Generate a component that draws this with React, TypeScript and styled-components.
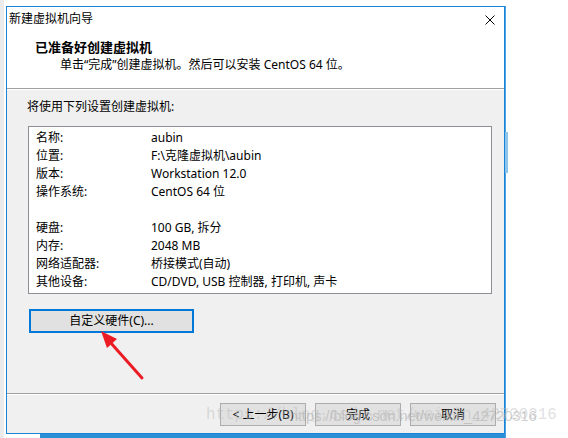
import React from "react";
import styled, { createGlobalStyle } from "styled-components";

const GlobalStyle = createGlobalStyle`
  *, *::before, *::after { box-sizing: border-box; }
  html, body { margin: 0; padding: 0; background: #fff; }
  body { font-family: "Noto Sans", "Noto Sans CJK SC", sans-serif; }
`;

const Page = styled.div`
  position: relative;
  width: 568px;
  height: 438px;
  overflow: hidden;
  background: #fff;
  display: flex;
  align-items: stretch;
`;

const LeftEdge = styled.div`
  width: 4px;
  margin-right: 2px;
  background: #ebebeb;
`;

const RightEdge = styled.div`
  width: 3px;
  background:
    linear-gradient(#8cc4ec, #8cc4ec) 0 132px / 3px 41px no-repeat,
    linear-gradient(#4fa3e3, #4fa3e3) 0 6px / 1px 100% no-repeat;
`;

const Column = styled.div`
  display: flex;
  flex-direction: column;
  padding-top: 6px;
`;

const Dialog = styled.div`
  width: 499px;
  height: 428px;
  border: 1px solid #1883d7;
  background: #f0f0f0;
  display: flex;
  flex-direction: column;
  font-size: 12px;
  line-height: 16px;
  color: #000;
`;

const TaskStrip = styled.div`
  height: 4px;
  margin-left: 34px;
  background: #2b8fd6;
`;

const Top = styled.div`
  height: 81px;
  background: #fff;
  display: flex;
  flex-direction: column;
`;

const TitleBar = styled.div`
  height: 23px;
  display: flex;
  align-items: center;
  justify-content: space-between;
  padding: 0 9px 0 2px;
`;

const Title = styled.span`
  font-size: 12px;
`;

const CloseIcon = styled.svg`
  width: 10px;
  height: 10px;
  margin-top: 2px;
`;

const Header = styled.div`
  padding: 9px 0 0 28px;
  display: flex;
  flex-direction: column;
`;

const Heading = styled.div`
  font-weight: bold;
  font-size: 13px;
  line-height: 17px;
`;

const SubTitle = styled.div`
  padding-left: 25px;
  margin-top: 1px;
`;

const Separator = styled.div`
  height: 2px;
  border-top: 1px solid #a0a0a0;
  background: #fff;
`;

const Body = styled.div`
  flex: 1;
  padding: 9px 12px 0 20px;
  display: flex;
  flex-direction: column;
  align-items: flex-start;
`;

const Intro = styled.div``;

const SummaryBox = styled.div`
  align-self: stretch;
  margin: 11px 0 0 1px;
  height: 168px;
  border: 1px solid #8c8f94;
  background: #fff;
  padding: 2px 0 0 7px;
  display: grid;
  grid-template-columns: 115px 1fr;
  grid-auto-rows: 18px;
  align-items: center;
`;

const Cell = styled.div`
  white-space: nowrap;
`;

const CustomButton = styled.div`
  margin: 15px 0 0 2px;
  width: 165px;
  height: 24px;
  border: 2px solid #0078d7;
  background: #e1e1e1;
  display: flex;
  align-items: center;
  justify-content: center;
`;

const Footer = styled.div`
  height: 38px;
  padding: 8px 8px 0 0;
  display: flex;
  justify-content: flex-end;
  align-items: flex-start;
  gap: 9px;
`;

const FooterButton = styled.div`
  width: 86px;
  height: 23px;
  border: 1px solid #adadad;
  background: #e1e1e1;
  display: flex;
  align-items: center;
  justify-content: center;
`;

const Watermark = styled.div<{ $left: number; $top: number; $mono?: boolean }>`
  position: absolute;
  left: ${(p) => p.$left}px;
  top: ${(p) => p.$top}px;
  white-space: nowrap;
  pointer-events: none;
  font-family: ${(p) => (p.$mono ? '"Liberation Mono", monospace' : '"Liberation Sans", sans-serif')};
  font-size: ${(p) => (p.$mono ? 15.8 : 14.5)}px;
  color: ${(p) => (p.$mono ? "rgba(185,185,185,0.45)" : "rgba(175,175,175,0.6)")};
`;

const ArrowSvg = styled.svg`
  position: absolute;
  left: 0;
  top: 0;
  width: 568px;
  height: 438px;
  pointer-events: none;
`;

const rows: [string, string][] = [
  ["名称:", "aubin"],
  ["位置:", "F:\\克隆虚拟机\\aubin"],
  ["版本:", "Workstation 12.0"],
  ["操作系统:", "CentOS 64 位"],
  ["", ""],
  ["硬盘:", "100 GB, 拆分"],
  ["内存:", "2048 MB"],
  ["网络适配器:", "桥接模式(自动)"],
  ["其他设备:", "CD/DVD, USB 控制器, 打印机, 声卡"],
];

export default function App() {
  return (
    <>
      <GlobalStyle />
      <Page>
        <LeftEdge />
        <Column>
          <Dialog>
            <Top>
              <TitleBar>
                <Title>新建虚拟机向导</Title>
                <CloseIcon viewBox="0 0 10 10">
                  <path d="M0.5 0.5 L9.5 9.5 M9.5 0.5 L0.5 9.5" stroke="#000" strokeWidth="1" fill="none" />
                </CloseIcon>
              </TitleBar>
              <Header>
                <Heading>已准备好创建虚拟机</Heading>
                <SubTitle>单击“完成”创建虚拟机。然后可以安装 CentOS 64 位。</SubTitle>
              </Header>
            </Top>
            <Separator />
            <Body>
              <Intro>将使用下列设置创建虚拟机:</Intro>
              <SummaryBox>
                {rows.map(([k, v], i) => (
                  <React.Fragment key={i}>
                    <Cell>{k}</Cell>
                    <Cell>{v}</Cell>
                  </React.Fragment>
                ))}
              </SummaryBox>
              <CustomButton>自定义硬件(C)...</CustomButton>
            </Body>
            <Separator />
            <Footer>
              <FooterButton>&lt; 上一步(B)</FooterButton>
              <FooterButton>完成</FooterButton>
              <FooterButton>取消</FooterButton>
            </Footer>
          </Dialog>
          <TaskStrip />
        </Column>
        <RightEdge />
        <Watermark $left={206} $top={406} $mono>
          https://blog.csdn.net/weixin_42720316
        </Watermark>
        <Watermark $left={290} $top={408}>
          https://blog.csdn.net/weixin_42720316
        </Watermark>
        <ArrowSvg viewBox="0 0 568 438">
          <line x1="142" y1="378" x2="110" y2="342" stroke="#ec1c24" strokeWidth="3" strokeLinecap="round" />
          <polygon points="101,331 117,339 107,348" fill="#ec1c24" />
        </ArrowSvg>
      </Page>
    </>
  );
}
